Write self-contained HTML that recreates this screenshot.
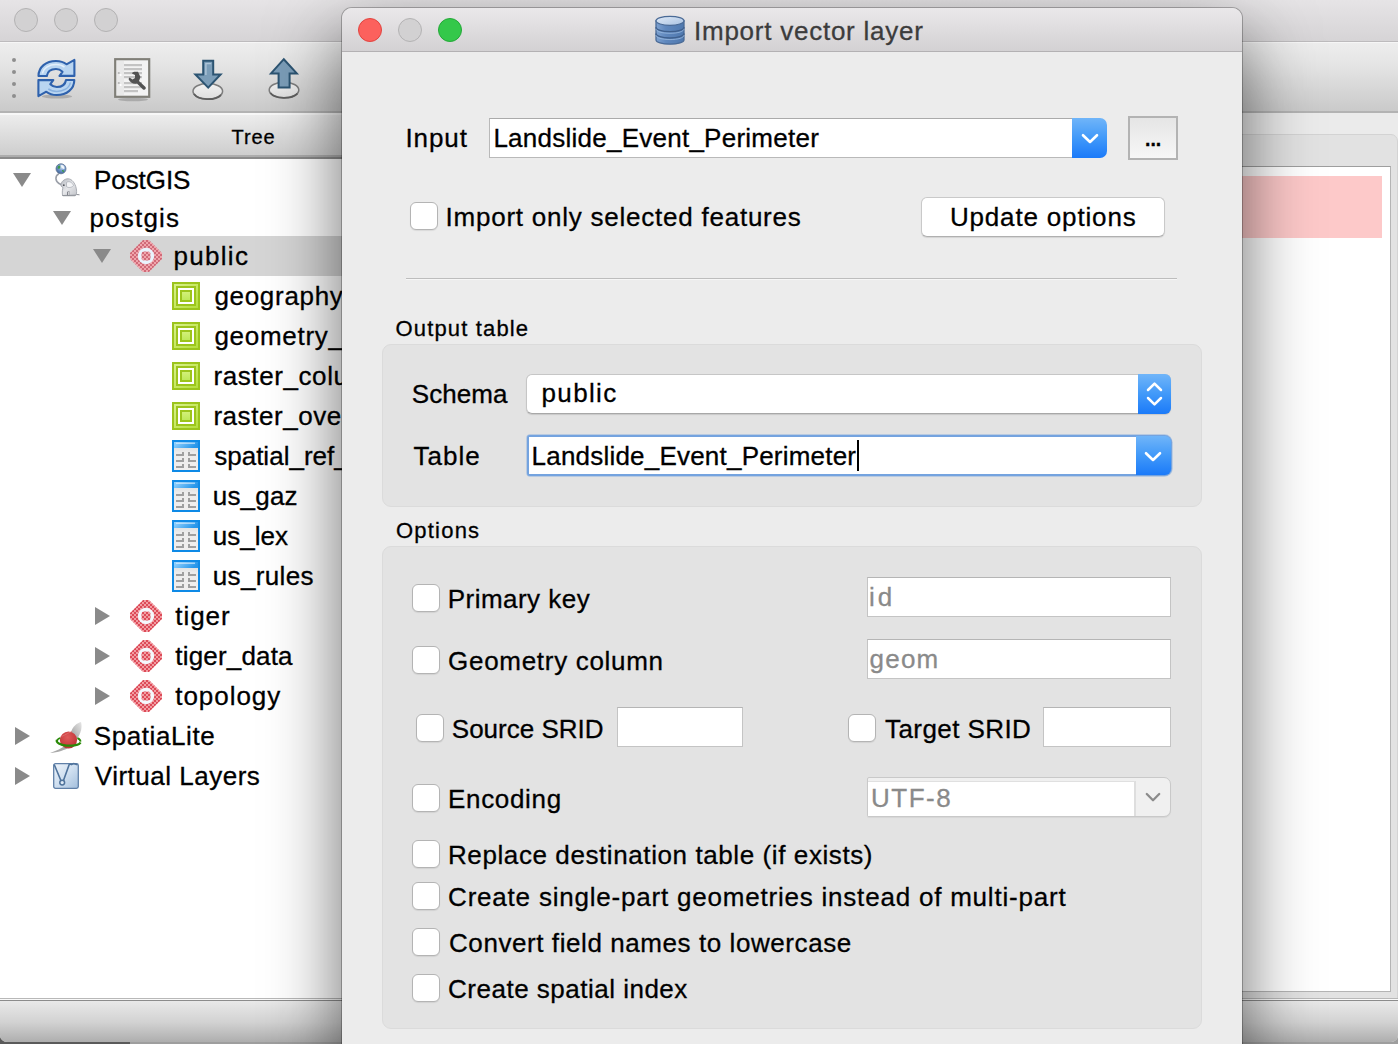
<!DOCTYPE html>
<html>
<head>
<meta charset="utf-8">
<title>Import vector layer</title>
<style>
html,body{margin:0;padding:0;}
body{width:1398px;height:1044px;overflow:hidden;position:relative;background:linear-gradient(90deg,#5a5a5a 0,#5a5a5a 130px,#9e9e9e 130px);font-family:"Liberation Sans",sans-serif;color:#000;}
.abs{position:absolute;}
.t{position:absolute;white-space:nowrap;font-size:26px;line-height:30px;height:30px;letter-spacing:0.7px;-webkit-text-stroke:0.3px currentColor;}
/* ---------- background window ---------- */
#bgwin{position:absolute;left:0;top:0;width:1398px;height:1041.5px;border-radius:0 0 7px 7px;overflow:hidden;background:#ececec;}
#bgtitle{position:absolute;left:0;top:0;width:1398px;height:42px;background:linear-gradient(#e6e4e6,#d6d4d6);border-bottom:1px solid #bdbbbd;box-sizing:border-box;}
.tl{position:absolute;width:24px;height:24px;border-radius:50%;box-sizing:border-box;}
.tl.off{background:#d2d1d2;border:1px solid #b3b2b3;}
#bgtool{position:absolute;left:0;top:42px;width:1398px;height:71px;background:linear-gradient(#f6f6f6 0,#f6f6f6 1px,#ededed 1.5px,#e4e4e4 35%,#cacaca);border-bottom:2px solid #b3b3b3;box-sizing:border-box;}
#treehead{position:absolute;left:0;top:113px;width:342px;height:46px;background:linear-gradient(#f7f7f7 0,#f7f7f7 1.5px,#ececec 2.5px,#dddddd 22px,#cecece 42px,#adadad 42px,#adadad 44px,#8b8b8b 44px,#8b8b8b 46px);box-sizing:border-box;}
#tree{position:absolute;left:0;top:159px;width:342px;height:839px;background:#fff;}
#status{position:absolute;left:0;top:998px;width:1398px;height:43.5px;background:linear-gradient(#b8b8b8 0,#b8b8b8 1px,#fafafa 1px,#fafafa 2px,#8c8c8c 2px,#8c8c8c 3px,#e9e9e9 3px,#d2d2d2 55%,#aeaeae 100%);box-sizing:border-box;}
.arr{position:absolute;width:0;height:0;}
.arr.down{border-left:9px solid transparent;border-right:9px solid transparent;border-top:14px solid #8a8a8a;}
.arr.right{border-top:9px solid transparent;border-bottom:9px solid transparent;border-left:15px solid #8a8a8a;}
.dot{position:absolute;left:12px;width:4px;height:4px;border-radius:50%;background:#8e8e8e;}
.gi{width:28px;height:28px;box-sizing:border-box;border:2px solid #9cc41c;background:linear-gradient(135deg,#d8f08a,#b4de3c);}
.gi i{position:absolute;left:2px;top:2px;width:20px;height:20px;box-sizing:border-box;border:2px solid #9cc41c;background:#fff;}
.gi b{position:absolute;left:6px;top:6px;width:12px;height:12px;box-sizing:border-box;border:2px solid #9cc41c;background:linear-gradient(#d2f078,#bfe85a);}
/* ---------- dialog ---------- */
#dlg{position:absolute;left:342px;top:8px;width:900px;height:1060px;border-radius:10px 10px 0 0;background:#ececec;box-shadow:0 30px 70px 3px rgba(0,0,0,0.55),0 0 0 1px rgba(0,0,0,0.25);overflow:hidden;}
#dtitle{position:absolute;left:0;top:0;width:900px;height:44px;background:linear-gradient(#eae8ea,#d3d1d3);border-bottom:1px solid #b3b1b3;box-sizing:border-box;}
.grp{position:absolute;background:#e3e3e3;border:1px solid #dbdbdb;border-radius:9px;box-sizing:border-box;}
.cb{position:absolute;width:28px;height:28px;box-sizing:border-box;background:#fff;border:1px solid #b4b4b4;border-radius:6px;box-shadow:0 1px 1px rgba(0,0,0,0.08);}
.inp{position:absolute;box-sizing:border-box;background:#fff;border:1px solid #c4c4c4;border-top-color:#b5b5b5;}
.gray{color:#8a8a8a;}
.bluebtn{position:absolute;box-sizing:border-box;background:linear-gradient(#70b5f9,#4199f9 50%,#1b7af9);}
</style>
</head>
<body>
<!--DEFS--><svg width="0" height="0" style="position:absolute"><defs>
<pattern id="chkn" width="4" height="4" patternUnits="userSpaceOnUse"><rect width="4" height="4" fill="#f29ca2"/><rect width="2" height="2" fill="#dc4a58"/><rect x="2" y="2" width="2" height="2" fill="#dc4a58"/></pattern>
<pattern id="chks" width="4" height="4" patternUnits="userSpaceOnUse"><rect width="4" height="4" fill="#f0a5ac"/><rect width="2" height="2" fill="#d06a78"/><rect x="2" y="2" width="2" height="2" fill="#d06a78"/></pattern>
<linearGradient id="bh" x1="0" y1="0" x2="1" y2="0.3"><stop offset="0" stop-color="#9ad6ff"/><stop offset="1" stop-color="#2796ea"/></linearGradient>
<linearGradient id="bb" x1="0" y1="0" x2="0" y2="1"><stop offset="0" stop-color="#e2e2e2"/><stop offset=".2" stop-color="#ececec"/><stop offset="1" stop-color="#f1efee"/></linearGradient>
<linearGradient id="eg" x1="0" y1="0" x2="1" y2="1"><stop offset="0" stop-color="#b5b9c0"/><stop offset=".5" stop-color="#e6e7ea"/><stop offset="1" stop-color="#c3c5ca"/></linearGradient>
<radialGradient id="gl" cx=".6" cy=".3" r=".8"><stop offset="0" stop-color="#dfe9f5"/><stop offset=".5" stop-color="#6b93c8"/><stop offset="1" stop-color="#39598c"/></radialGradient>
<radialGradient id="rb" cx=".45" cy=".35" r=".7"><stop offset="0" stop-color="#df5a5a"/><stop offset=".7" stop-color="#c83c3e"/><stop offset="1" stop-color="#b03034"/></radialGradient>
<linearGradient id="fe" x1="0" y1="1" x2="1" y2="0"><stop offset="0" stop-color="#9a9a9a"/><stop offset=".6" stop-color="#c9c9c9"/><stop offset="1" stop-color="#e6e6e6"/></linearGradient>
<linearGradient id="vl" x1="0" y1="0" x2="1" y2="1"><stop offset="0" stop-color="#eef4fa"/><stop offset=".5" stop-color="#cfdff0"/><stop offset="1" stop-color="#a3bfdd"/></linearGradient>
<linearGradient id="el" x1="0" y1="0" x2="0" y2="1"><stop offset="0" stop-color="#f2f2f2"/><stop offset="1" stop-color="#dedede"/></linearGradient>
<linearGradient id="dbb" x1="0" y1="0" x2="1" y2="0"><stop offset="0" stop-color="#7da1d0"/><stop offset=".35" stop-color="#5f87bd"/><stop offset="1" stop-color="#4f78ae"/></linearGradient><linearGradient id="dbt" x1="0" y1="0" x2="1" y2="1"><stop offset="0" stop-color="#dfe9f6"/><stop offset="1" stop-color="#a9c2e2"/></linearGradient></defs></svg><!--/DEFS-->
<div id="bgwin">
  <div id="bgtitle">
    <div class="tl off" style="left:14px;top:8px"></div>
    <div class="tl off" style="left:54px;top:8px"></div>
    <div class="tl off" style="left:94px;top:8px"></div>
  </div>
  <div id="bgtool"></div>
  <div id="treehead"><div class="t" id="treelbl" style="left:231.60px;top:9px;font-size:20px;letter-spacing:0.867px">Tree</div></div>
  <div id="tree"></div>
  
  
  
  
  
  
  
  
  
  
  
  
  
  
  
  
  
  
  
  
  <!--TB-->
<div class="dot" style="top:58px"></div><div class="dot" style="top:70px"></div><div class="dot" style="top:82px"></div><div class="dot" style="top:94px"></div>
<svg class="abs" style="left:36px;top:56px" width="42" height="44" viewBox="0 0 42 44">
<ellipse cx="21" cy="40.5" rx="15" ry="2" fill="#000" opacity=".18"/>
<path d="M2.5 20 C2.5 11 10 5 20 5 C24.5 5 28 6.3 30.5 8.3 L38.4 3.9 L38.4 19.9 L23.5 19.9 L26.5 15.8 C24.5 13.8 22.5 13 20 13 C15 13 11.5 15.5 10.8 20 Z" fill="#b9d5f1" stroke="#2f62ad" stroke-width="2.1" stroke-linejoin="round"/>
<path d="M38.3 24 C38.3 33 30.8 39 20.8 39 C16.3 39 12.8 37.7 10.3 35.7 L2.4 40.1 L2.4 24.1 L17.3 24.1 L14.3 28.2 C16.3 30.2 18.3 31 20.8 31 C25.8 31 29.3 28.5 30 24 Z" fill="#b9d5f1" stroke="#2f62ad" stroke-width="2.1" stroke-linejoin="round"/>
<path d="M6.5 17.5 C7.5 11.5 13.5 8.6 20 8.6 C23.5 8.6 26.5 9.6 28.5 11.2" fill="none" stroke="#e4f0fb" stroke-width="1.5"/>
<path d="M34.3 26.5 C33.3 32.5 27.3 35.4 20.8 35.4 C17.3 35.4 14.3 34.4 12.3 32.8" fill="none" stroke="#8ab2e0" stroke-width="1.5"/>
</svg>
<svg class="abs" style="left:112px;top:56px" width="42" height="46" viewBox="0 0 42 46">
<ellipse cx="21" cy="43.5" rx="15" ry="1.8" fill="#000" opacity=".18"/>
<rect x="3.2" y="3.2" width="34" height="37.6" fill="#f3f3f3" stroke="#807f78" stroke-width="2.2"/>
<rect x="5" y="5" width="7" height="34" fill="#e9e9e9"/>
<g fill="#c3c3c3"><rect x="12" y="8" width="18" height="2.2"/><rect x="12" y="12" width="18" height="2.2"/><rect x="12" y="16" width="18" height="2.2"/><rect x="12" y="20" width="18" height="2.2"/><rect x="12" y="26" width="18" height="2.2"/><rect x="12" y="30" width="18" height="2.2"/><rect x="12" y="34" width="14" height="2.2"/></g>
<circle cx="6.8" cy="17" r="1.1" fill="#b5b5b5"/><circle cx="8.6" cy="19" r="1.1" fill="#fff"/><circle cx="6.8" cy="27" r="1.1" fill="#b5b5b5"/><circle cx="8.6" cy="29" r="1.1" fill="#fff"/>
<path d="M20 17.5 C20 15.5 23 15.5 26 15.8 L27.5 19 L28.5 21 L27 25 L33.5 31 C34.5 32.5 33 34.5 31 33.5 L25 27.5 C22 28.5 18 27 16.5 23 L17.5 21.5 L20.5 23.5 L23 22 L23 19 Z" fill="#525252"/>
</svg>
<svg class="abs" style="left:190px;top:56px" width="36" height="46" viewBox="0 0 36 46">
<ellipse cx="17.8" cy="35.3" rx="14.8" ry="7.8" fill="url(#el)" stroke="#7d7d7d" stroke-width="1.5"/>
<path d="M4 38 A14.8 7.8 0 0 0 31 39" fill="none" stroke="#5e5e5e" stroke-width="1.8"/>
<path d="M13.2 4.8 L23.2 4.8 L23.2 18.4 L30.6 18.4 L18.2 31.6 L5.4 18.4 L13.2 18.4Z" fill="#7b9db8" stroke="#2c5472" stroke-width="2" stroke-linejoin="miter"/>
<path d="M15.2 7 L21.2 7 L21.2 8.2 L16.6 8.2 L16.6 19 L15.2 19Z" fill="#b4cadb" opacity=".9"/>
</svg>
<svg class="abs" style="left:266px;top:54px" width="36" height="48" viewBox="0 0 36 48">
<ellipse cx="18" cy="36" rx="14.8" ry="7.8" fill="url(#el)" stroke="#7d7d7d" stroke-width="1.5"/>
<path d="M4.4 39 A14.8 7.8 0 0 0 31.4 39.6" fill="none" stroke="#5e5e5e" stroke-width="1.8"/>
<path d="M17.8 5.2 L30.8 19.4 L23.6 19.4 L23.6 33.6 L12.6 33.6 L12.6 19.4 L5 19.4Z" fill="#7b9db8" stroke="#2c5472" stroke-width="2" stroke-linejoin="miter"/>
</svg>
<!--/TB-->
<!--TREE--><div class="abs" style="left:0;top:236px;width:342px;height:40px;background:#d5d5d5"></div>
<div class="arr down" style="left:13px;top:173px"></div>
<svg class="abs" style="left:52px;top:162px" width="28" height="36" viewBox="0 0 28 36">
<path d="M6.5 12 C3 14 3 19 7 21.5 C9 22.8 10.5 23 11.5 23.5" fill="none" stroke="#9a9fa8" stroke-width="1.6" stroke-linecap="round"/>
<path d="M9 22 C10 18.5 14 16 17.5 17 C21 18 24 23 24.5 28 C24.8 30.5 24.5 32 24 33 L10.5 33.5 C10 30 10.5 27 11 25.5 C9.5 25 8.5 23.5 9 22Z" fill="url(#eg)" stroke="#9a9ea6" stroke-width=".8"/>
<path d="M14.5 20.5 C17 18.5 20.5 20.5 21.5 23.5 C19.5 26 16 26 14.5 24.5Z" fill="#f3f4f6" stroke="#a4a8b0" stroke-width=".7"/>
<rect x="15.2" y="29.5" width="2.6" height="4" rx=".6" fill="#6d7078"/><rect x="16.2" y="30" width="1.3" height="3" fill="#e8e8ea"/>
<path d="M10 33 L11 34.2 L23 34.2 L24.5 33Z" fill="#8a8d94" opacity=".8"/>
<path d="M24.5 32.5 L27.5 32.8" stroke="#8a8d94" stroke-width="1"/>
<circle cx="11.8" cy="23.2" r=".9" fill="#50535a"/>
<circle cx="9" cy="6.8" r="5" fill="url(#gl)" stroke="#5b6f8e" stroke-width=".8"/>
<path d="M5.8 4.5 C7 3 8.5 3.2 8.3 5.2 C8.2 6.8 6.8 7.2 5.6 6.2Z" fill="#3f9a4c"/><path d="M9.8 8.2 C11 7.6 12.6 8.6 12 9.8 C11.2 10.4 10.2 9.6 9.8 8.2Z" fill="#3f9a4c"/>
<path d="M9 3 C11.5 3 12.6 5 12.4 7 C11 7.2 9.2 6 9 3Z" fill="#f2f6fb"/>
</svg>
<div class="t" id="r1" style="left:94.00px;top:164.8px;letter-spacing:-0.067px">PostGIS</div>
<div class="arr down" style="left:53px;top:211px"></div>
<div class="t" id="r2" style="left:89.60px;top:202.8px;letter-spacing:1.167px">postgis</div>
<div class="arr down" style="left:93px;top:249px"></div>
<svg class="abs" style="left:130px;top:240px" width="32" height="32" viewBox="0 0 32 32"><path d="M13 0 L19 0 L32 13 L32 19 L19 32 L13 32 L0 19 L0 13Z" fill="url(#chks)"/><circle cx="16" cy="16" r="8.2" fill="#e9f3fc"/><circle cx="16" cy="16" r="6.2" fill="none" stroke="url(#chks)" stroke-width="0"/><rect x="11.5" y="11.5" width="9" height="9" rx="2.5" fill="url(#chks)"/></svg>
<div class="t" id="r3" style="left:173.50px;top:240.8px;letter-spacing:1.3px">public</div>
<div class="abs gi" style="left:172px;top:282px"><i></i><b></b></div>
<div class="t" id="g0" style="left:214.40px;top:280.8px;letter-spacing:0.7px">geography_columns</div>
<div class="abs gi" style="left:172px;top:322px"><i></i><b></b></div>
<div class="t" id="g1" style="left:214.40px;top:320.8px;letter-spacing:0.729px">geometry_columns</div>
<div class="abs gi" style="left:172px;top:362px"><i></i><b></b></div>
<div class="t" id="g2" style="left:213.40px;top:360.8px;letter-spacing:0.6px">raster_columns</div>
<div class="abs gi" style="left:172px;top:402px"><i></i><b></b></div>
<div class="t" id="g3" style="left:213.40px;top:400.8px;letter-spacing:0.556px">raster_overviews</div>
<svg class="abs" style="left:172px;top:440px" width="28" height="32" viewBox="0 0 28 32"><rect width="28" height="32" fill="#0e8ae6"/><rect x="2" y="2" width="24" height="6" fill="url(#bh)"/><rect x="4" y="2.6" width="19" height="1.2" fill="#dff0ff" opacity=".8"/><rect x="2" y="8" width="24" height="22" fill="url(#bb)"/><g fill="#9f9f9f"><rect x="4" y="14" width="8" height="2"/><rect x="10" y="12" width="2" height="4"/><rect x="16" y="12" width="2" height="4"/><rect x="16" y="14" width="8" height="2"/><rect x="4" y="20" width="8" height="2"/><rect x="10" y="18" width="2" height="4"/><rect x="16" y="18" width="2" height="4"/><rect x="16" y="20" width="8" height="2"/><rect x="4" y="26" width="8" height="2"/><rect x="10" y="24" width="2" height="4"/><rect x="16" y="24" width="2" height="4"/><rect x="16" y="26" width="8" height="2"/></g></svg>
<div class="t" id="b0" style="left:214.20px;top:440.8px;letter-spacing:0.01px">spatial_ref_sys</div>
<svg class="abs" style="left:172px;top:480px" width="28" height="32" viewBox="0 0 28 32"><rect width="28" height="32" fill="#0e8ae6"/><rect x="2" y="2" width="24" height="6" fill="url(#bh)"/><rect x="4" y="2.6" width="19" height="1.2" fill="#dff0ff" opacity=".8"/><rect x="2" y="8" width="24" height="22" fill="url(#bb)"/><g fill="#9f9f9f"><rect x="4" y="14" width="8" height="2"/><rect x="10" y="12" width="2" height="4"/><rect x="16" y="12" width="2" height="4"/><rect x="16" y="14" width="8" height="2"/><rect x="4" y="20" width="8" height="2"/><rect x="10" y="18" width="2" height="4"/><rect x="16" y="18" width="2" height="4"/><rect x="16" y="20" width="8" height="2"/><rect x="4" y="26" width="8" height="2"/><rect x="10" y="24" width="2" height="4"/><rect x="16" y="24" width="2" height="4"/><rect x="16" y="26" width="8" height="2"/></g></svg>
<div class="t" id="b1" style="left:212.80px;top:480.8px;letter-spacing:0.18px">us_gaz</div>
<svg class="abs" style="left:172px;top:520px" width="28" height="32" viewBox="0 0 28 32"><rect width="28" height="32" fill="#0e8ae6"/><rect x="2" y="2" width="24" height="6" fill="url(#bh)"/><rect x="4" y="2.6" width="19" height="1.2" fill="#dff0ff" opacity=".8"/><rect x="2" y="8" width="24" height="22" fill="url(#bb)"/><g fill="#9f9f9f"><rect x="4" y="14" width="8" height="2"/><rect x="10" y="12" width="2" height="4"/><rect x="16" y="12" width="2" height="4"/><rect x="16" y="14" width="8" height="2"/><rect x="4" y="20" width="8" height="2"/><rect x="10" y="18" width="2" height="4"/><rect x="16" y="18" width="2" height="4"/><rect x="16" y="20" width="8" height="2"/><rect x="4" y="26" width="8" height="2"/><rect x="10" y="24" width="2" height="4"/><rect x="16" y="24" width="2" height="4"/><rect x="16" y="26" width="8" height="2"/></g></svg>
<div class="t" id="b2" style="left:212.80px;top:520.8px;letter-spacing:0.02px">us_lex</div>
<svg class="abs" style="left:172px;top:560px" width="28" height="32" viewBox="0 0 28 32"><rect width="28" height="32" fill="#0e8ae6"/><rect x="2" y="2" width="24" height="6" fill="url(#bh)"/><rect x="4" y="2.6" width="19" height="1.2" fill="#dff0ff" opacity=".8"/><rect x="2" y="8" width="24" height="22" fill="url(#bb)"/><g fill="#9f9f9f"><rect x="4" y="14" width="8" height="2"/><rect x="10" y="12" width="2" height="4"/><rect x="16" y="12" width="2" height="4"/><rect x="16" y="14" width="8" height="2"/><rect x="4" y="20" width="8" height="2"/><rect x="10" y="18" width="2" height="4"/><rect x="16" y="18" width="2" height="4"/><rect x="16" y="20" width="8" height="2"/><rect x="4" y="26" width="8" height="2"/><rect x="10" y="24" width="2" height="4"/><rect x="16" y="24" width="2" height="4"/><rect x="16" y="26" width="8" height="2"/></g></svg>
<div class="t" id="b3" style="left:212.80px;top:560.8px;letter-spacing:0.343px">us_rules</div>
<div class="arr right" style="left:95px;top:607px"></div>
<svg class="abs" style="left:130px;top:600px" width="32" height="32" viewBox="0 0 32 32"><path d="M13 0 L19 0 L32 13 L32 19 L19 32 L13 32 L0 19 L0 13Z" fill="url(#chkn)"/><circle cx="16" cy="16" r="8.2" fill="#f4f8fd"/><circle cx="16" cy="16" r="6.2" fill="none" stroke="url(#chkn)" stroke-width="0"/><rect x="11.5" y="11.5" width="9" height="9" rx="2.5" fill="url(#chkn)"/></svg>
<div class="t" id="s0" style="left:175.30px;top:600.8px;letter-spacing:0.95px">tiger</div>
<div class="arr right" style="left:95px;top:647px"></div>
<svg class="abs" style="left:130px;top:640px" width="32" height="32" viewBox="0 0 32 32"><path d="M13 0 L19 0 L32 13 L32 19 L19 32 L13 32 L0 19 L0 13Z" fill="url(#chkn)"/><circle cx="16" cy="16" r="8.2" fill="#f4f8fd"/><circle cx="16" cy="16" r="6.2" fill="none" stroke="url(#chkn)" stroke-width="0"/><rect x="11.5" y="11.5" width="9" height="9" rx="2.5" fill="url(#chkn)"/></svg>
<div class="t" id="s1" style="left:175.30px;top:640.8px;letter-spacing:0.178px">tiger_data</div>
<div class="arr right" style="left:95px;top:687px"></div>
<svg class="abs" style="left:130px;top:680px" width="32" height="32" viewBox="0 0 32 32"><path d="M13 0 L19 0 L32 13 L32 19 L19 32 L13 32 L0 19 L0 13Z" fill="url(#chkn)"/><circle cx="16" cy="16" r="8.2" fill="#f4f8fd"/><circle cx="16" cy="16" r="6.2" fill="none" stroke="url(#chkn)" stroke-width="0"/><rect x="11.5" y="11.5" width="9" height="9" rx="2.5" fill="url(#chkn)"/></svg>
<div class="t" id="s2" style="left:175.30px;top:680.8px;letter-spacing:0.943px">topology</div>
<div class="arr right" style="left:15px;top:727px"></div>
<svg class="abs" style="left:48px;top:720px" width="38" height="36" viewBox="0 0 38 36">
<path d="M2 33 C8 31 14 28 18 25 L22 27 C17 30 10 32.5 2 33Z" fill="#a9a9a9"/>
<path d="M23 12 C25 6 29 3 33 2 C34.5 7 33 13 29 19 L24 17Z" fill="url(#fe)"/>
<circle cx="20.5" cy="20" r="8.6" fill="url(#rb)"/>
<path d="M13.5 16.5 C17 15 22 12 24 11.5" stroke="#e07474" stroke-width="1" fill="none" opacity=".7"/>
<path d="M8.9 20.5 A12 4.4 0 0 0 32.6 22" fill="none" stroke="#2a8a08" stroke-width="2.2" transform="rotate(2 20 21)"/>
<path d="M9 21.2 C9 19.6 10.4 18.6 12.2 18" fill="none" stroke="#2a8a08" stroke-width="1.8"/>
<path d="M32.4 21.6 C32.6 20.2 31.4 19 29.4 18.2" fill="none" stroke="#2a8a08" stroke-width="1.8"/>
</svg>
<div class="t" id="r15" style="left:93.80px;top:720.8px;letter-spacing:0.578px">SpatiaLite</div>
<div class="arr right" style="left:15px;top:767px"></div>
<svg class="abs" style="left:52px;top:762px" width="28" height="28" viewBox="0 0 28 28">
<rect x="1.7" y="1.7" width="24.6" height="24.6" rx="1.8" fill="url(#vl)" stroke="#6080a8" stroke-width="1.3"/>
<path d="M2.2 2.5 L9.2 19.2 M17.4 2 L11.2 19.2 M17.4 2 L19.5 2.6 L21.5 1.6 L25.5 2.8" fill="none" stroke="#4f739c" stroke-width="1.6" stroke-linejoin="round"/>
<circle cx="10.2" cy="20.6" r="2.4" fill="#dfeaf5" stroke="#4f739c" stroke-width="1.5"/>
</svg>
<div class="t" id="r16" style="left:94.80px;top:760.8px;letter-spacing:0.5px">Virtual Layers</div><!--/TREE-->
  <div id="rightpane">
    <div class="abs" style="left:1200px;top:113px;width:198px;height:887px;background:#ebebeb"></div>
    <div class="abs" style="left:1200px;top:134px;width:198px;height:880px;background:#e2e2e2;border:1px solid #d3d3d3;border-radius:0 7px 0 0;box-sizing:border-box"></div>
    <div class="abs" style="left:1200px;top:166px;width:191px;height:826px;background:#fff;border:1px solid #b4b4b4;border-top-color:#9e9e9e;box-sizing:border-box"></div>
    <div class="abs" style="left:1200px;top:176px;width:182px;height:62px;background:#fdc9c9"></div>
  </div>
  <div id="status"></div>
</div>
<div id="dlg">
  <div id="dtitle">
    <div class="tl" style="left:16px;top:10px;background:#fc615d;border:1px solid #e1443f"></div>
    <div class="tl off" style="left:56px;top:10px"></div>
    <div class="tl" style="left:96px;top:10px;background:#34c84a;border:1px solid #24a838"></div>
    <div class="t" id="ttl" style="left:352.00px;top:8px;color:#3c3c3c;letter-spacing:0.756px">Import vector layer</div>
  </div>
<!--DLG--><div class="abs" style="left:-342px;top:-8px;width:0;height:0">
<svg class="abs" style="left:654px;top:14.6px" width="32" height="30.5" viewBox="0 0 32 34" preserveAspectRatio="none">
<path d="M2 6.5 L2 27.5 C2 30.5 8 32.5 16 32.5 C24 32.5 30 30.5 30 27.5 L30 6.5Z" fill="url(#dbb)" stroke="#4a6a96" stroke-width="1.3"/>
<path d="M2 13.6 C2 16.6 8 18.6 16 18.6 C24 18.6 30 16.6 30 13.6 M2 20.6 C2 23.6 8 25.6 16 25.6 C24 25.6 30 23.6 30 20.6" fill="none" stroke="#3f5f8c" stroke-width="1.5"/>
<path d="M2 15.4 C2 18.4 8 20.4 16 20.4 C24 20.4 30 18.4 30 15.4 M2 22.4 C2 25.4 8 27.4 16 27.4 C24 27.4 30 25.4 30 22.4" fill="none" stroke="#9dbbe0" stroke-width="1" opacity=".8"/>
<ellipse cx="16" cy="6.5" rx="14" ry="5" fill="url(#dbt)" stroke="#4a6a96" stroke-width="1.3"/>
</svg>
<div class="t " id="l_input" style="left:405.40px;top:123.4px;letter-spacing:0.925px">Input</div>
<div class="inp" style="left:489px;top:118px;width:590px;height:40px;border-color:#b9b9b9;border-top-color:#aaa"></div>
<div class="t " id="l_land1" style="left:493.40px;top:122.7px;letter-spacing:0.25px">Landslide_Event_Perimeter</div>
<div class="bluebtn" style="left:1072px;top:118px;width:35px;height:40px;border-radius:0 7px 7px 0"></div>
<svg class="abs" style="left:1080.6px;top:133px" width="18" height="12" viewBox="0 0 18 12"><path d="M2 2.2 L9 9 L16 2.2" fill="none" stroke="#fff" stroke-width="2.6" stroke-linecap="round" stroke-linejoin="round"/></svg>
<div class="abs" style="left:1128px;top:116px;width:50px;height:44px;box-sizing:border-box;border:2px solid #b3b3b3;background:linear-gradient(#e5e5e5,#f7f7f7)"></div>
<div class="t " id="l_dots" style="left:1145px;top:124px;font-size:19.5px;letter-spacing:0;font-weight:bold">...</div>
<div class="cb" style="left:410px;top:202px"></div>
<div class="t " id="l_imp" style="left:445.60px;top:201.7px;letter-spacing:0.761px">Import only selected features</div>
<div class="abs" style="left:921px;top:197px;width:243.5px;height:39.5px;box-sizing:border-box;background:#fff;border-radius:6px;border:1px solid #c9c9c9;border-bottom-color:#b0b0b0;box-shadow:0 1px 1px rgba(0,0,0,0.10)"></div>
<div class="t " id="l_upd" style="left:949.90px;top:201.6px;letter-spacing:0.838px">Update options</div>
<div class="abs" style="left:406px;top:278px;width:771px;height:1px;background:#bdbdbd"></div><div class="abs" style="left:406px;top:279px;width:771px;height:1px;background:#f6f6f6"></div>
<div class="t " id="l_out" style="left:395.60px;top:314px;font-size:22px;letter-spacing:1.145px">Output table</div>
<div class="grp" style="left:382px;top:344px;width:819.5px;height:163px"></div>
<div class="t " id="l_schema" style="left:411.80px;top:379.2px;letter-spacing:0.06px">Schema</div>
<div class="abs" style="left:525.5px;top:374px;width:645.5px;height:39.5px;box-sizing:border-box;background:#fff;border-radius:6px;border:1px solid #c6c6c6;border-bottom-color:#a8a8a8;box-shadow:0 1px 1px rgba(0,0,0,0.12)"></div>
<div class="t " id="l_public" style="left:541.60px;top:378.4px;letter-spacing:1.32px">public</div>
<div class="bluebtn" style="left:1138px;top:374px;width:33px;height:39.5px;border-radius:0 6px 6px 0"></div>
<svg class="abs" style="left:1145px;top:380px" width="19" height="28" viewBox="0 0 19 28"><path d="M3 10 L9.5 3.6 L16 10 M3 18 L9.5 24.4 L16 18" fill="none" stroke="#fff" stroke-width="2.5" stroke-linecap="round" stroke-linejoin="round"/></svg>
<div class="t " id="l_table" style="left:413.40px;top:441.3px;letter-spacing:1.05px">Table</div>
<div class="abs" style="left:526.5px;top:434.6px;width:645.4px;height:41.9px;border-radius:3px 7.5px 7.5px 3px;background:#74a3df;box-shadow:0 0 0 0.7px rgba(116,163,223,0.5)"></div>
<div class="abs" style="left:528.5px;top:437.3px;width:608px;height:36.7px;background:#fff"></div>
<div class="bluebtn" style="left:1135.5px;top:436.3px;width:35.3px;height:38.7px;border-radius:0 6px 6px 0"></div>
<svg class="abs" style="left:1144px;top:451.4px" width="18" height="12" viewBox="0 0 18 12"><path d="M2 2.2 L9 9 L16 2.2" fill="none" stroke="#fff" stroke-width="2.6" stroke-linecap="round" stroke-linejoin="round"/></svg>
<div class="t " id="l_land2" style="left:531.60px;top:440.6px;letter-spacing:0.208px">Landslide_Event_Perimeter</div>
<div class="abs" style="left:857.3px;top:440px;width:2px;height:31px;background:#000"></div>
<div class="t " id="l_opt" style="left:396.00px;top:516px;font-size:22px;letter-spacing:1.217px">Options</div>
<div class="grp" style="left:382px;top:546px;width:819.5px;height:483px"></div>
<div class="cb" style="left:412px;top:584px"></div>
<div class="t " id="c1" style="left:447.80px;top:584px;letter-spacing:0.46px">Primary key</div>
<div class="cb" style="left:412px;top:646px"></div>
<div class="t " id="c2" style="left:448.10px;top:646px;letter-spacing:0.7px">Geometry column</div>
<div class="cb" style="left:412px;top:784px"></div>
<div class="t " id="c5" style="left:448.00px;top:784px;letter-spacing:0.671px">Encoding</div>
<div class="cb" style="left:412px;top:840px"></div>
<div class="t " id="c6" style="left:448.00px;top:840px;letter-spacing:0.592px">Replace destination table (if exists)</div>
<div class="cb" style="left:412px;top:882px"></div>
<div class="t " id="c7" style="left:448.10px;top:882px;letter-spacing:0.79px">Create single-part geometries instead of multi-part</div>
<div class="cb" style="left:412px;top:928px"></div>
<div class="t " id="c8" style="left:449.00px;top:928px;letter-spacing:0.574px">Convert field names to lowercase</div>
<div class="cb" style="left:412px;top:974px"></div>
<div class="t " id="c9" style="left:448.10px;top:974px;letter-spacing:0.495px">Create spatial index</div>
<div class="cb" style="left:416px;top:714px"></div>
<div class="t " id="c3" style="left:451.80px;top:714px;letter-spacing:0.01px">Source SRID</div>
<div class="cb" style="left:848px;top:714px"></div>
<div class="t " id="c4" style="left:885.00px;top:714px;letter-spacing:0.42px">Target SRID</div>
<div class="inp" style="left:617px;top:707px;width:126px;height:40px"></div>
<div class="inp" style="left:1043px;top:707px;width:128px;height:40px"></div>
<div class="inp" style="left:867px;top:577px;width:304px;height:40px"></div>
<div class="t gray" id="l_id" style="left:869.00px;top:582px;letter-spacing:2.9px">id</div>
<div class="inp" style="left:867px;top:639px;width:304px;height:40px"></div>
<div class="t gray" id="l_geom" style="left:869.60px;top:644px;letter-spacing:1.2px">geom</div>
<div class="abs" style="left:867px;top:777px;width:304px;height:40px;box-sizing:border-box;background:#f0f0f0;border:1px solid #c9c9c9;border-radius:2px 7px 7px 2px;box-shadow:0 1px 1px rgba(0,0,0,0.06)"></div>
<div class="abs" style="left:868px;top:781px;width:266px;height:34px;background:#fff;border-top:1px solid #e0e0e0;border-right:2px solid #dedede"></div>
<svg class="abs" style="left:1145.2px;top:792.4px" width="16" height="11" viewBox="0 0 16 11"><path d="M1.8 2 L8 8.2 L14.2 2" fill="none" stroke="#8b8b8b" stroke-width="2.3" stroke-linecap="round" stroke-linejoin="round"/></svg>
<div class="t gray" id="l_utf" style="left:871.00px;top:782.6px;letter-spacing:1.5px">UTF-8</div>
</div><!--/DLG--></div>
</body>
</html>
